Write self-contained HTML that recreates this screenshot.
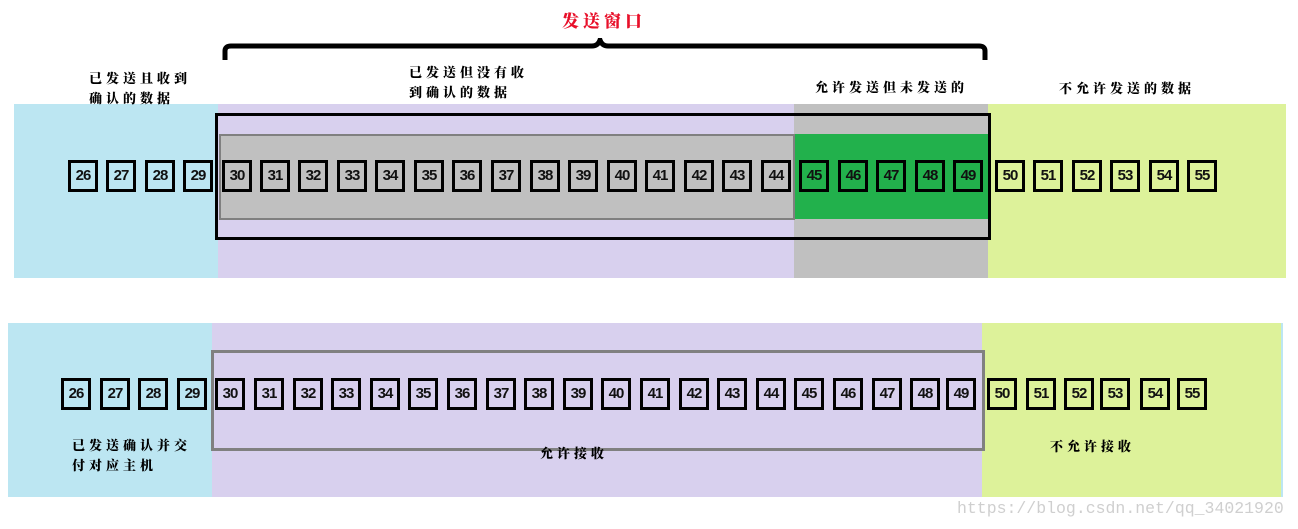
<!DOCTYPE html>
<html><head><meta charset="utf-8"><style>
*{margin:0;padding:0;box-sizing:border-box}
body{width:1298px;height:529px;background:#fff;position:relative;overflow:hidden;font-family:"Liberation Sans",sans-serif}
.a{position:absolute}
.b{position:absolute;width:30px;height:32px;border:3px solid #000;font:bold 15px/26px "Liberation Sans",sans-serif;text-align:center;letter-spacing:-1px;color:#111}
.t{position:absolute;font:900 13px/20px "Noto Serif CJK SC","WenQuanYi Zen Hei",serif;letter-spacing:4px;color:#000;white-space:nowrap}
</style></head><body>
<div class="a" style="left:14px;top:104px;width:204px;height:174px;background:#bce6f2"></div>
<div class="a" style="left:218px;top:104px;width:576px;height:174px;background:#d8d0ee"></div>
<div class="a" style="left:794px;top:104px;width:194px;height:174px;background:#c0c0c0"></div>
<div class="a" style="left:988px;top:104px;width:298px;height:174px;background:#ddf29a"></div>
<div class="a" style="left:219px;top:134px;width:576px;height:86px;background:#c0c0c0;border:2px solid #808080"></div>
<div class="a" style="left:795px;top:134px;width:195px;height:85px;background:#22b14c"></div>
<div class="a" style="left:215px;top:113px;width:776px;height:127px;border:3px solid #000"></div>
<svg class="a" style="left:220px;top:38px" width="772" height="24"><path d="M5 22 V13 Q5 8 11 8 H372 Q378 8 380 2 Q382 8 388 8 H759 Q765 8 765 13 V22" fill="none" stroke="#000" stroke-width="5"/></svg>
<div class="t" style="left:562px;top:10px;color:#e8102a;font-size:17px;letter-spacing:4px">发送窗口</div>
<div class="t" style="left:89px;top:68px">已发送且收到</div>
<div class="t" style="left:89px;top:88px">确认的数据</div>
<div class="t" style="left:409px;top:62px">已发送但没有收</div>
<div class="t" style="left:409px;top:82px">到确认的数据</div>
<div class="t" style="left:815px;top:77px">允许发送但未发送的</div>
<div class="t" style="left:1059px;top:78px">不允许发送的数据</div>
<div class="b" style="left:68px;top:160px">26</div><div class="b" style="left:106px;top:160px">27</div><div class="b" style="left:145px;top:160px">28</div><div class="b" style="left:183px;top:160px">29</div><div class="b" style="left:222px;top:160px">30</div><div class="b" style="left:260px;top:160px">31</div><div class="b" style="left:298px;top:160px">32</div><div class="b" style="left:337px;top:160px">33</div><div class="b" style="left:375px;top:160px">34</div><div class="b" style="left:414px;top:160px">35</div><div class="b" style="left:452px;top:160px">36</div><div class="b" style="left:491px;top:160px">37</div><div class="b" style="left:530px;top:160px">38</div><div class="b" style="left:568px;top:160px">39</div><div class="b" style="left:607px;top:160px">40</div><div class="b" style="left:645px;top:160px">41</div><div class="b" style="left:684px;top:160px">42</div><div class="b" style="left:722px;top:160px">43</div><div class="b" style="left:761px;top:160px">44</div><div class="b" style="left:799px;top:160px">45</div><div class="b" style="left:838px;top:160px">46</div><div class="b" style="left:876px;top:160px">47</div><div class="b" style="left:915px;top:160px">48</div><div class="b" style="left:953px;top:160px">49</div><div class="b" style="left:995px;top:160px">50</div><div class="b" style="left:1033px;top:160px">51</div><div class="b" style="left:1072px;top:160px">52</div><div class="b" style="left:1110px;top:160px">53</div><div class="b" style="left:1149px;top:160px">54</div><div class="b" style="left:1187px;top:160px">55</div>
<div class="a" style="left:8px;top:323px;width:204px;height:174px;background:#bce6f2"></div>
<div class="a" style="left:212px;top:323px;width:770px;height:174px;background:#d8d0ee"></div>
<div class="a" style="left:982px;top:323px;width:299px;height:174px;background:#ddf29a"></div>
<div class="a" style="left:1281px;top:323px;width:2px;height:174px;background:#bce6f2"></div>
<div class="a" style="left:211px;top:350px;width:774px;height:101px;border:3px solid #808080"></div>
<div class="t" style="left:72px;top:435px">已发送确认并交</div>
<div class="t" style="left:72px;top:455px">付对应主机</div>
<div class="t" style="left:540px;top:443px">允许接收</div>
<div class="t" style="left:1050px;top:436px">不允许接收</div>
<div class="b" style="left:61px;top:378px">26</div><div class="b" style="left:100px;top:378px">27</div><div class="b" style="left:138px;top:378px">28</div><div class="b" style="left:177px;top:378px">29</div><div class="b" style="left:215px;top:378px">30</div><div class="b" style="left:254px;top:378px">31</div><div class="b" style="left:293px;top:378px">32</div><div class="b" style="left:331px;top:378px">33</div><div class="b" style="left:370px;top:378px">34</div><div class="b" style="left:408px;top:378px">35</div><div class="b" style="left:447px;top:378px">36</div><div class="b" style="left:486px;top:378px">37</div><div class="b" style="left:524px;top:378px">38</div><div class="b" style="left:563px;top:378px">39</div><div class="b" style="left:601px;top:378px">40</div><div class="b" style="left:640px;top:378px">41</div><div class="b" style="left:679px;top:378px">42</div><div class="b" style="left:717px;top:378px">43</div><div class="b" style="left:756px;top:378px">44</div><div class="b" style="left:794px;top:378px">45</div><div class="b" style="left:833px;top:378px">46</div><div class="b" style="left:872px;top:378px">47</div><div class="b" style="left:910px;top:378px">48</div><div class="b" style="left:946px;top:378px">49</div><div class="b" style="left:987px;top:378px">50</div><div class="b" style="left:1026px;top:378px">51</div><div class="b" style="left:1064px;top:378px">52</div><div class="b" style="left:1100px;top:378px">53</div><div class="b" style="left:1140px;top:378px">54</div><div class="b" style="left:1177px;top:378px">55</div>
<div class="a" style="left:957px;top:498px;font:16.5px/22px 'Liberation Mono',monospace;color:#cfcfcf;white-space:nowrap">https://blog.csdn.net/qq_34021920</div>
</body></html>
